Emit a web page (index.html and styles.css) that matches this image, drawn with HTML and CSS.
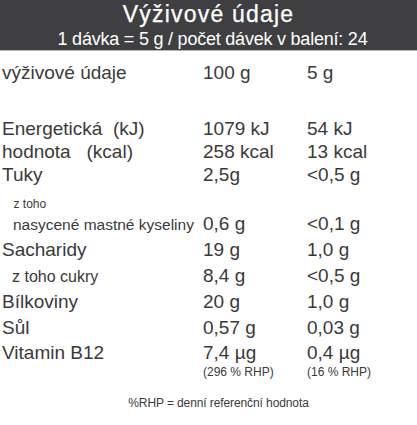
FILE: index.html
```html
<!DOCTYPE html>
<html lang="cs">
<head>
<meta charset="utf-8">
<title>Výživové údaje</title>
<link rel="stylesheet" href="styles.css">
</head>
<body>
<div class="panel">
  <header class="head">
    <div class="title">Výživové údaje</div>
    <div class="subtitle">1 dávka = 5 g / počet dávek v balení: 24</div>
  </header>
  <div class="table">
    <div class="row r25 first"><span>výživové údaje</span><span>100 g</span><span>5 g</span></div>
    <div class="row r23 gap"><span>Energetická&nbsp; (kJ)</span><span>1079 kJ</span><span>54 kJ</span></div>
    <div class="row r23"><span>hodnota &nbsp; (kcal)</span><span>258 kcal</span><span>13 kcal</span></div>
    <div class="row r23"><span>Tuky</span><span>2,5g</span><span>&lt;0,5 g</span></div>
    <div class="row small note-top"><span class="ind">z toho</span></div>
    <div class="row r25"><span class="sub sat ind">nasycené mastné kyseliny</span><span>0,6 g</span><span>&lt;0,1 g</span></div>
    <div class="row r25"><span>Sacharidy</span><span>19 g</span><span>1,0 g</span></div>
    <div class="row r25"><span class="sub ind2">z toho cukry</span><span>8,4 g</span><span>&lt;0,5 g</span></div>
    <div class="row r25"><span>Bílkoviny</span><span>20 g</span><span>1,0 g</span></div>
    <div class="row r25"><span>Sůl</span><span>0,57 g</span><span>0,03 g</span></div>
    <div class="row r25"><span>Vitamin B12</span><span>7,4 µg</span><span>0,4 µg</span></div>
    <div class="row small"><span></span><span>(296 % RHP)</span><span>(16 % RHP)</span></div>
  </div>
  <p class="foot">%RHP = denní referenční hodnota</p>
</div>
</body>
</html>
```
FILE: styles.css
```css
html, body {
  margin: 0;
  padding: 0;
  background: #ffffff;
}
body {
  font-family: "Liberation Sans", Arial, Helvetica, sans-serif;
  color: #3a3a3a;
  width: 417px;
  height: 425px;
  overflow: hidden;
}
.head {
  background: #3f3f41;
  color: #ffffff;
  height: 49px;
  border-bottom: 1px solid #b8b8b8;
  text-align: center;
  padding-top: 1px;
  box-sizing: content-box;
}
.title {
  font-size: 23px;
  line-height: 26px;
  letter-spacing: 1.2px;
  -webkit-text-stroke: 0.25px #ffffff;
}
.subtitle {
  font-size: 18px;
  line-height: 22px;
  letter-spacing: -0.22px;
  margin-top: 1px;
  padding-left: 8px;
}
.table {
  padding-top: 9px;
}
.row {
  display: grid;
  grid-template-columns: 201px 104px 1fr;
  padding-left: 2px;
  align-items: baseline;
  font-size: 19px;
  white-space: nowrap;
}
.r25 { line-height: 25.4px; }
.r23 { line-height: 23px; }
.row.first { line-height: 25px; }
.row.gap { margin-top: 32px; }
.row.small {
  font-size: 12px;
  line-height: 14px;
}
.note-top { margin-top: 11px; }
.sub { font-size: 16px; }
.sub.sat { font-size: 15.5px; }
.ind { padding-left: 11px; }
.ind2 { padding-left: 10px; }
.small .ind { padding-left: 11.5px; }
.foot {
  margin: 17px 0 0;
  font-size: 12px;
  line-height: 14px;
  letter-spacing: -0.1px;
  text-align: center;
  padding-left: 20px;
}
```
